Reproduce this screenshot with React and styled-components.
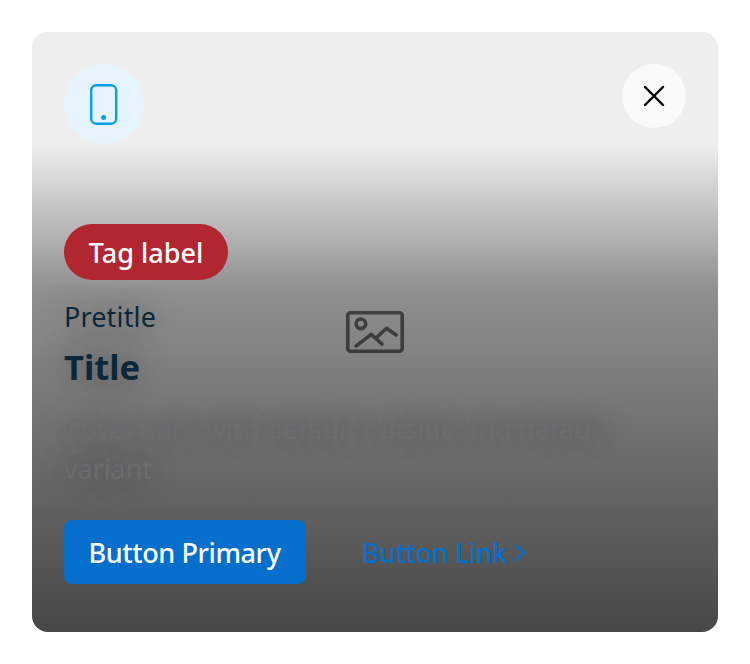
import React from "react";
import styled, { createGlobalStyle } from "styled-components";

const GlobalStyle = createGlobalStyle`
  * { box-sizing: border-box; }
  body {
    margin: 0;
    background: #fff;
    font-family: "Noto Sans", "Open Sans", sans-serif;
  }
`;

const Page = styled.main`
  padding: 32px;
`;

const Card = styled.section`
  position: relative;
  display: flex;
  flex-direction: column;
  justify-content: space-between;
  width: 686px;
  height: 600px;
  border-radius: 16px;
  overflow: hidden;
  background: #eeeeee;
`;

const ImagePlaceholder = styled.svg`
  position: absolute;
  left: 314px;
  top: 278px;
  width: 58px;
  height: 44px;
  fill: none;
  stroke: #6b6c6f;
  stroke-width: 3.6;
  stroke-linecap: round;
  stroke-linejoin: round;
`;

const Header = styled.header`
  display: flex;
  justify-content: space-between;
  align-items: flex-start;
  padding: 32px 32px 0;
`;

const Circle = styled.div`
  display: flex;
  align-items: center;
  justify-content: center;
  width: ${(p) => p.$size}px;
  height: ${(p) => p.$size}px;
  border-radius: 50%;
  background: ${(p) => p.$fill};
`;

const CloseButton = styled(Circle).attrs({ as: "button" })`
  border: 0;
  padding: 0;
`;

const Content = styled.div`
  position: relative;
  height: 488px;
  padding: 80px 32px 48px;
  background: linear-gradient(
    180deg,
    rgba(0, 0, 0, 0) 0%,
    rgba(0, 0, 0, 0.4) 30%,
    rgba(0, 0, 0, 0.7) 100%
  );
`;

const Tag = styled.div`
  display: flex;
  align-items: center;
  justify-content: center;
  width: 164px;
  height: 56px;
  padding-top: 2px;
  border-radius: 28px;
  background: #b22632;
  color: #fff;
  font-size: 27px;
  font-weight: 500;
  line-height: 40px;
  white-space: nowrap;
`;

const Text = styled.p`
  margin: ${(p) => p.$top}px 0 0;
  color: ${(p) => p.$color};
  font-size: ${(p) => p.$size}px;
  font-weight: ${(p) => p.$weight || 400};
  line-height: ${(p) => p.$line}px;
  letter-spacing: ${(p) => p.$spacing || 0}px;
  text-shadow: 0 0 30px rgba(0, 0, 0, 0.4);
`;

const Actions = styled.div`
  display: flex;
  align-items: center;
  gap: 56px;
  margin-top: 31px;
`;

const PrimaryButton = styled.button`
  width: 242px;
  height: 64px;
  padding: 2px 1px 0 0;
  border: 0;
  border-radius: 8px;
  background: #066fcb;
  color: #fff;
  font: 500 27px/40px "Noto Sans", "Open Sans", sans-serif;
  letter-spacing: -0.4px;
  white-space: nowrap;
`;

const LinkButton = styled.a`
  display: flex;
  align-items: center;
  gap: 8px;
  padding-top: 2px;
  color: #066fcb;
  font-size: 27px;
  font-weight: 500;
  line-height: 40px;
  letter-spacing: -0.4px;
  white-space: nowrap;
`;

export default function App() {
  return (
    <>
      <GlobalStyle />
      <Page>
        <Card>
          <ImagePlaceholder viewBox="0 0 58 44">
            <rect x="1.8" y="2.8" width="54.4" height="38.4" rx="2.6" />
            <circle cx="14.9" cy="13.8" r="4.8" />
            <path d="M10 36.2 25.2 24.3 36 34M30 28 40.5 18.3 50.2 25" />
          </ImagePlaceholder>
          <Header>
            <Circle $size={80} $fill="#e5f3fd">
              <svg width="28" height="42" viewBox="0 0 28 42" fill="none">
                <rect x="1.2" y="2.3" width="25" height="38.4" rx="5" stroke="#0b9ced" strokeWidth="2.4" />
                <circle cx="13.6" cy="34.5" r="2.5" fill="#0b9ced" />
              </svg>
            </Circle>
            <CloseButton $size={64} $fill="#fafafa" aria-label="Close">
              <svg width="22" height="22" viewBox="0 0 22 22" fill="none" stroke="#000" strokeWidth="2.4" strokeLinecap="round">
                <path d="M2 2 20 20M20 2 2 20" />
              </svg>
            </CloseButton>
          </Header>
          <Content>
            <Tag>Tag label</Tag>
            <Text $top={17} $size={27} $line={40} $spacing={0.15} $color="#0b2739">Pretitle</Text>
            <Text $top={6} $size={34.5} $line={48} $weight={700} $color="#0b2739">Title</Text>
            <Text $top={18} $size={27} $line={40} $spacing={-0.1} $color="#6b6c6f">
              Cover card with default outside and default<br />variant
            </Text>
            <Actions>
              <PrimaryButton>Button Primary</PrimaryButton>
              <LinkButton>
                Button Link
                <svg width="11" height="18" viewBox="0 0 11 18" fill="none" stroke="#066fcb" strokeWidth="2.5" strokeLinecap="round" strokeLinejoin="round">
                  <path d="M1.5 1.6 8.7 8.8 1.5 16" />
                </svg>
              </LinkButton>
            </Actions>
          </Content>
        </Card>
      </Page>
    </>
  );
}
